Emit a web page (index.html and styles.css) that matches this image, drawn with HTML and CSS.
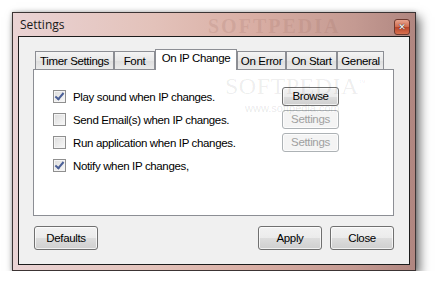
FILE: index.html
```html
<!DOCTYPE html>
<html>
<head>
    <meta charset="utf-8"/>
    <title>Settings</title>
    <link rel="stylesheet" href="styles.css">
</head>
<body>
<div class="window">
    <div class="titlebar">
        <span class="title">Settings</span>
        <span class="title-mark">SOFTPEDIA</span>
        <span class="close-btn">&#x2715;</span>
    </div>
    <div class="client">
        <div class="tabs">
            <span class="tab tab-timer">Timer Settings</span>
            <span class="tab tab-font">Font</span>
            <span class="tab tab-ip active">On IP Change</span>
            <span class="tab tab-error">On Error</span>
            <span class="tab tab-start">On Start</span>
            <span class="tab tab-general">General</span>
        </div>
        <div class="panel">
            <span class="mark-big">SOFTPEDIA<sup>™</sup></span>
            <span class="mark-small">www.softpedia.com</span>
            <div class="row">
                <label class="check"><span class="box checked"></span>Play sound when IP changes.</label>
                <span class="btn">Browse</span>
            </div>
            <div class="row">
                <label class="check"><span class="box"></span>Send Email(s) when IP changes.</label>
                <span class="btn disabled">Settings</span>
            </div>
            <div class="row">
                <label class="check"><span class="box"></span>Run application when IP changes.</label>
                <span class="btn disabled">Settings</span>
            </div>
            <div class="row">
                <label class="check"><span class="box checked"></span>Notify when IP changes,</label>
            </div>
        </div>
        <div class="footer">
            <span class="btn big">Defaults</span>
            <span class="spacer"></span>
            <span class="btn big">Apply</span>
            <span class="btn big">Close</span>
        </div>
    </div>
</div>
</body>
</html>
```
FILE: styles.css
```css
* {
    margin: 0;
    padding: 0;
    box-sizing: border-box;
}

body {
    background: #fff;
    font: 11.5px "Liberation Sans", Arial, sans-serif;
    letter-spacing: -0.35px;
    color: #000;
}

.window {
    margin: 12px 0 0 12px;
    width: 404px;
    height: 259px;
    border: 1px solid #3c3434;
    background: linear-gradient(to right, #ead3d4 0%, #e3c2ba 35%, #d9aea4 60%, #c49a92 85%, #b08680 100%);
    box-shadow: 4px 5px 10px rgba(0, 0, 0, 0.55), 0 0 4px rgba(0, 0, 0, 0.25);
    padding: 0 5px 5px 5px;
    display: flex;
    flex-direction: column;
}

.titlebar {
    height: 23px;
    display: flex;
    align-items: center;
    position: relative;
}

.title {
    font: 12px "Open Sans", "Noto Sans", sans-serif;
    letter-spacing: 0;
    color: #1a1a1a;
    margin-left: 2px;
    margin-top: -1px;
}

.title-mark {
    position: absolute;
    left: 190px;
    top: 2px;
    font: bold 20px "Liberation Serif", serif;
    letter-spacing: 2px;
    color: rgba(160, 110, 100, 0.2);
}

.close-btn {
    margin-left: auto;
    margin-top: 4px;
    width: 16px;
    height: 16px;
    border: 1px solid #6d3a30;
    border-radius: 3px;
    background: linear-gradient(#e8a48e, #d06a4e 50%, #b8442a 51%, #d8704e);
    color: #fff;
    font: bold 9px "DejaVu Sans", sans-serif;
    letter-spacing: 0;
    text-align: center;
    line-height: 14px;
    text-shadow: 0 0 1px #333, 0 0 1px #333;
}

.client {
    flex: 1;
    border: 1px solid #1c1c1c;
    background: #f0f0f0;
    padding: 12px 15px 13px 14px;
    display: flex;
    flex-direction: column;
}

.tabs {
    display: flex;
    align-items: flex-end;
    height: 21px;
    padding-left: 2px;
}

.tab {
    height: 18px;
    margin-bottom: 1px;
    border: 1px solid #8c8e94;
    border-bottom: 0;
    background: linear-gradient(#f4f4f4, #e8e8e8 50%, #dedede 51%, #eaeaea);
    text-align: center;
    line-height: 18px;
}

.tab.active {
    height: 21px;
    margin-bottom: 0;
    background: #fff;
    line-height: 17px;
    position: relative;
    z-index: 2;
}

.tab-timer { width: 79px; }
.tab-font { width: 41px; }
.tab-ip { width: 82px; }
.tab-error { width: 49px; }
.tab-start { width: 51px; }
.tab-general { width: 47px; }

.panel {
    position: relative;
    margin-top: -1px;
    height: 147px;
    border: 1px solid #8c8e94;
    background: #fff;
    padding: 15px 54px 0 19px;
}

.mark-big {
    position: absolute;
    left: 191px;
    top: 3px;
    font: 24px "Liberation Serif", serif;
    letter-spacing: 0.5px;
    color: rgba(0, 0, 0, 0.08);
}

.mark-big sup {
    font-size: 7px;
    letter-spacing: 0;
}

.mark-small {
    position: absolute;
    left: 211px;
    top: 32px;
    font: 11px "Liberation Sans", sans-serif;
    letter-spacing: 0;
    color: rgba(0, 0, 0, 0.1);
}

.row {
    height: 23px;
    display: grid;
    grid-template-columns: 1fr 57px;
    align-items: center;
}

.check {
    display: flex;
    align-items: center;
    gap: 7px;
}

.box {
    width: 13px;
    height: 13px;
    border: 1px solid #8f8f8f;
    background: linear-gradient(135deg, #dcdcdc, #f8f8f8);
    box-shadow: inset 0 0 0 1px #f4f4f4;
    position: relative;
}

.box.checked::after {
    content: "";
    position: absolute;
    left: 3px;
    top: 0px;
    width: 3px;
    height: 7px;
    border: solid #4a5f97;
    border-width: 0 2px 2px 0;
    transform: rotate(40deg);
}

.btn {
    height: 19px;
    border: 1px solid #707070;
    border-radius: 3px;
    background: linear-gradient(#f2f2f2, #ebebeb 50%, #dddddd 51%, #cfcfcf);
    box-shadow: inset 0 0 0 1px rgba(255, 255, 255, 0.7);
    text-align: center;
    line-height: 17px;
    margin-top: -1px;
}

.btn.disabled {
    border-color: #adb2b5;
    background: #f4f4f4;
    color: #a0a0a0;
}

.footer {
    display: flex;
    gap: 8px;
    margin-top: 10px;
    padding-left: 1px;
}

.btn.big {
    width: 64px;
    height: 24px;
    line-height: 22px;
    margin-top: 0;
}

.spacer {
    flex: 1;
}
```
